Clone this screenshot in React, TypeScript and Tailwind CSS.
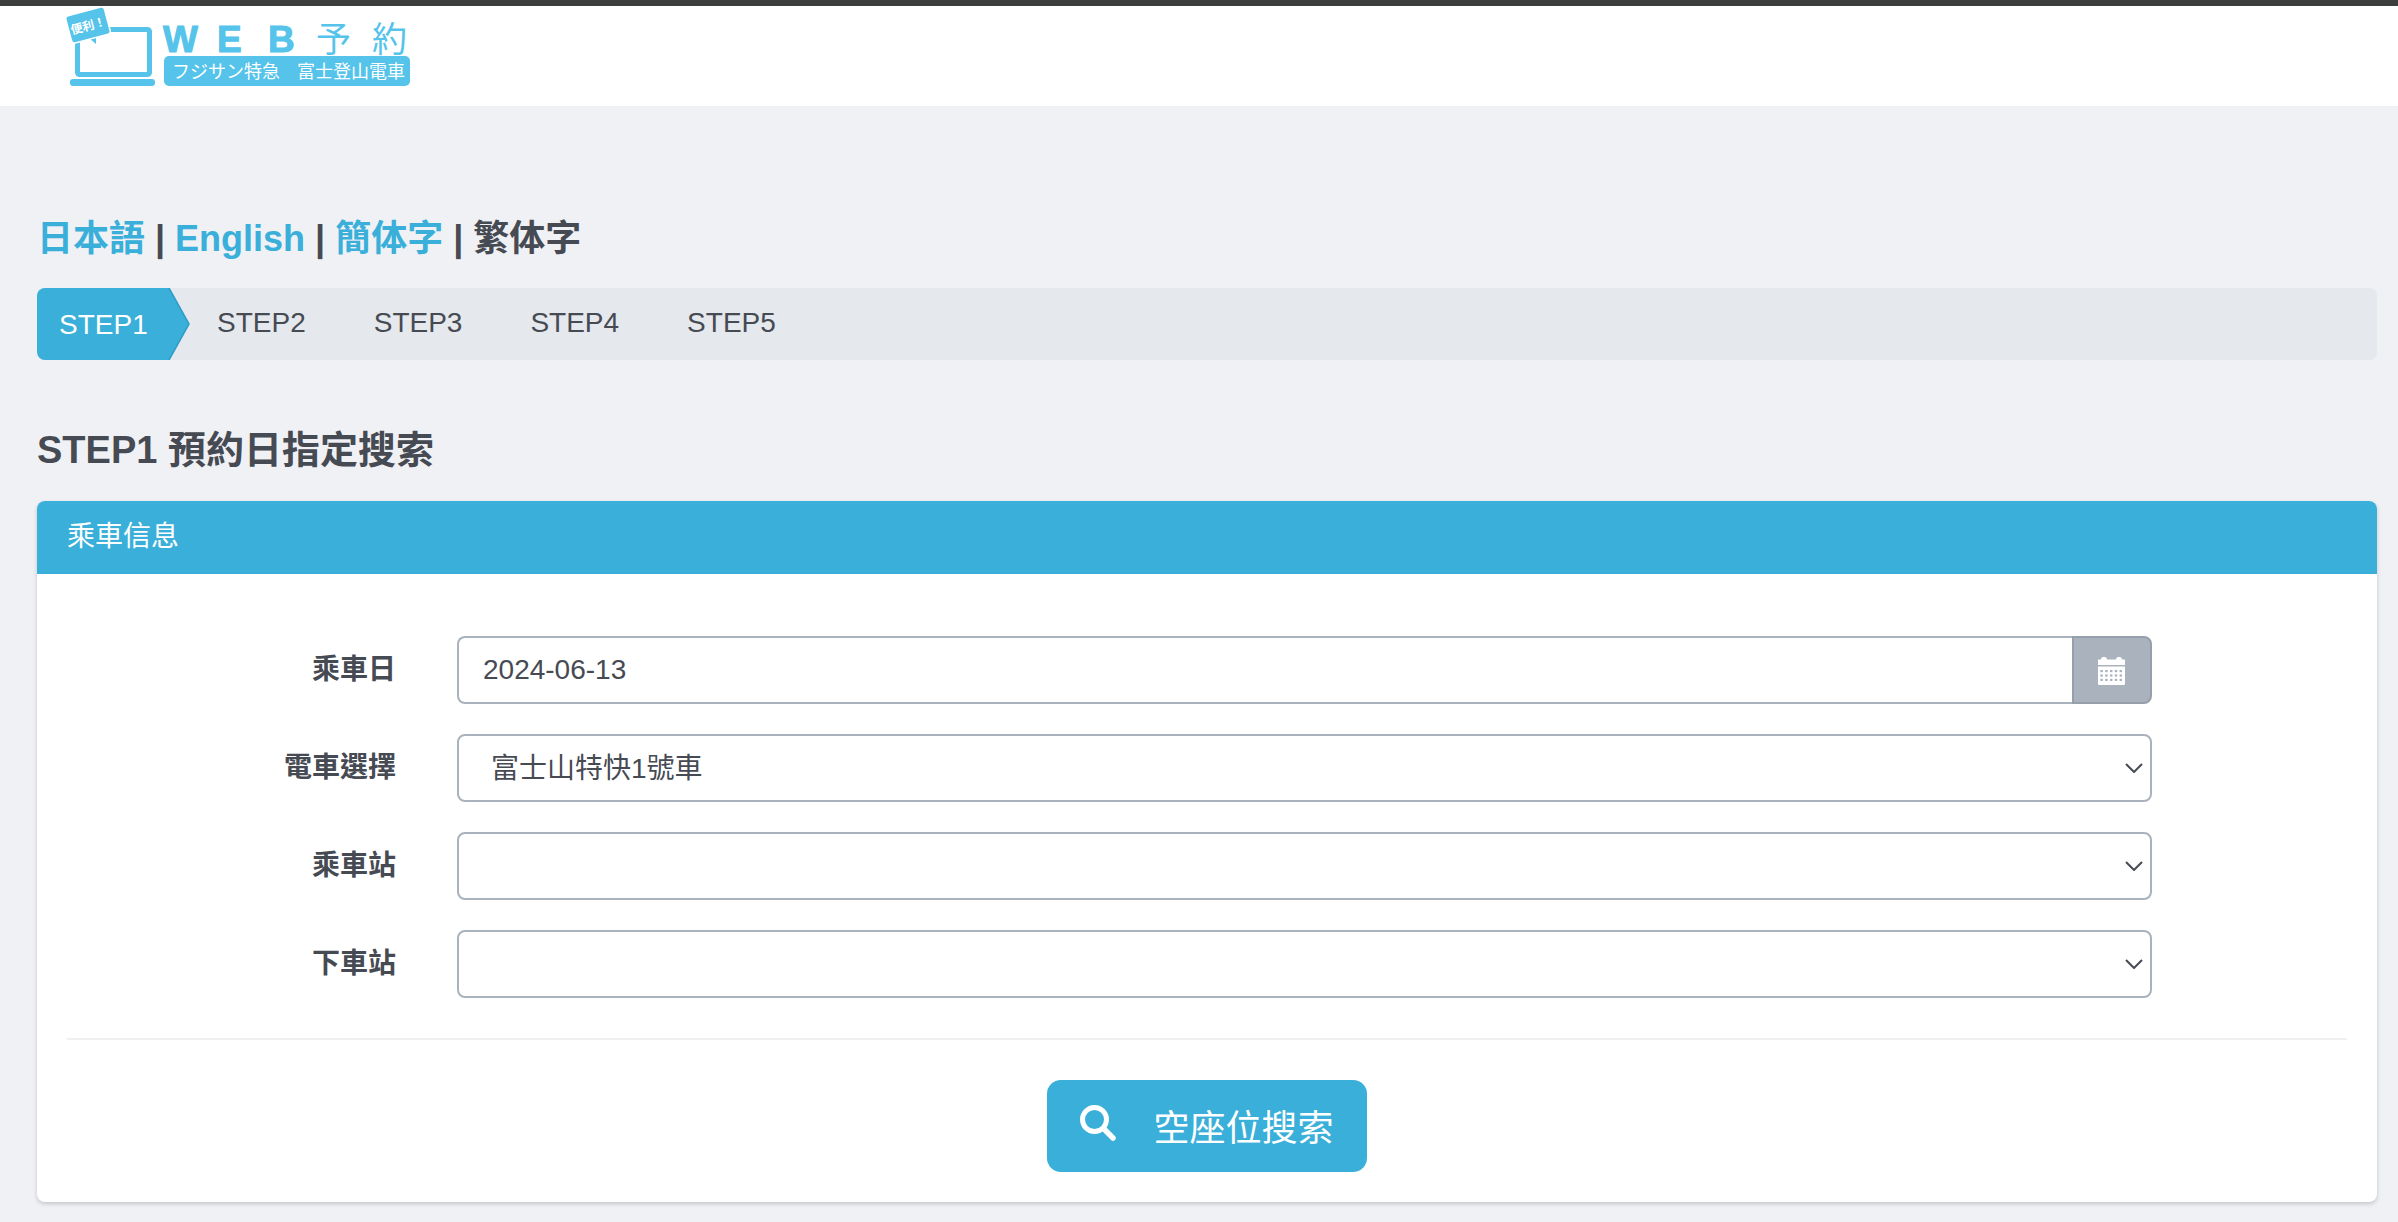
import React from "react";

const FONT = "font-['Liberation_Sans','Noto_Sans_CJK_TC',sans-serif]";

function Logo() {
  const c = "#55c3ea";
  const latin = "'Liberation Sans',sans-serif";
  const jp = "'Noto Sans CJK JP',sans-serif";
  return (
    <svg width="360" height="90" viewBox="0 0 360 90" className="block">
      <rect x="11" y="73" width="85" height="7" rx="3" fill={c} />
      <rect x="18.5" y="23.5" width="72" height="45" rx="2" fill="none" stroke={c} strokeWidth="5" />
      <path d="M30 32 L37 32 L37 38 Z" fill={c} />
      <g transform="rotate(-15 29 19)">
        <rect x="9" y="5" width="40" height="28" rx="3" fill={c} stroke="#fff" strokeWidth="1.5" />
        <text x="29" y="24" textAnchor="middle" fontSize="12" fontWeight="700" fill="#fff" fontFamily={jp}>便利！</text>
      </g>
      <text x="104" y="46" fontSize="37" fontWeight="700" fill={c} stroke={c} strokeWidth="1" fontFamily={latin}>W</text>
      <text x="158" y="46" fontSize="37" fontWeight="700" fill={c} stroke={c} strokeWidth="1" fontFamily={latin}>E</text>
      <text x="209" y="46" fontSize="37" fontWeight="700" fill={c} stroke={c} strokeWidth="1" fontFamily={latin}>B</text>
      <text x="257" y="46" fontSize="35" fill={c} fontFamily={jp}>予</text>
      <text x="313" y="46" fontSize="35" fill={c} fontFamily={jp}>約</text>
      <rect x="105" y="50" width="246" height="30" rx="5" fill={c} />
      <text x="113" y="72" fontSize="18" fill="#fff" fontFamily={jp}>フジサン特急</text>
      <text x="238" y="72" fontSize="18" fill="#fff" fontFamily={jp}>富士登山電車</text>
    </svg>
  );
}

function CalendarIcon() {
  const dots: React.ReactNode[] = [];
  for (let r = 0; r < 3; r++) {
    for (let i = 0; i < 5; i++) {
      dots.push(<rect key={`${r}-${i}`} x={2.4 + i * 4.8} y={14 + r * 4.4} width="2.4" height="2.2" fill="#a9b2bd" />);
    }
  }
  return (
    <svg width="27" height="29" viewBox="0 0 27 29" className="-ml-[2px]">
      <path d="M0 3.5 H3 Q3 1 5 1 H7 Q9 1 9 3.5 H18 Q18 1 20 1 H22 Q24 1 24 3.5 H27 V9 H0 Z M0 10.5 H27 V28 Q27 29 26 29 H1 Q0 29 0 28 Z" fill="#fff" />
      {dots}
    </svg>
  );
}

function Chevron() {
  return (
    <svg width="18" height="10" viewBox="0 0 18 10" fill="none" stroke="#464a53" strokeWidth="2" className="absolute right-[9px] top-[29px] pointer-events-none">
      <path d="M1 1 L9 9 L17 1" />
    </svg>
  );
}

function Row({ label, children }: { label: string; children: React.ReactNode }) {
  return (
    <div className="flex items-center">
      <label className="w-[329px] text-right text-[28px] font-bold leading-none text-[#464a53]">{label}</label>
      <div className="ml-[61px] w-[1695px] relative">{children}</div>
    </div>
  );
}

function Select({ value }: { value?: string }) {
  return (
    <div className="relative">
      <select
        defaultValue={value ?? ""}
        className={`${FONT} block h-[68px] w-full appearance-none rounded-lg border-2 border-[#a9b2bd] bg-white pl-[32px] pt-[2px] text-[28px] text-[#464a53] outline-none`}
      >
        <option value={value ?? ""}>{value ?? ""}</option>
      </select>
      <Chevron />
    </div>
  );
}

export default function App() {
  const steps = ["STEP2", "STEP3", "STEP4", "STEP5"];
  return (
    <div className={`${FONT} h-[1222px] overflow-hidden bg-[#f0f1f5] text-[#464a53]`}>
      <header className="h-[106px] border-t-[6px] border-[#3c3d3d] bg-white pl-[59px]">
        <Logo />
      </header>
      <main className="pl-[37px] pr-[21px]">
        <div className="mt-[108px] h-[50px] text-[36px] font-bold leading-[50px]">
          <span className="text-[#39afd9]">日本語</span>
          <span> | </span>
          <span className="text-[#39afd9]">English</span>
          <span> | </span>
          <span className="text-[#39afd9]">簡体字</span>
          <span> | </span>
          <span>繁体字</span>
        </div>

        <nav className="mt-[24px] flex h-[72px] items-center rounded-lg bg-[#e5e8ec]">
          <div className="relative flex h-full w-[132px] items-center rounded-l-lg bg-[#39afd9] pl-[22px] pt-[2px] text-[28px] text-white">
            STEP1
            <svg width="22" height="72" viewBox="0 0 22 72" className="absolute left-[131px] top-0">
              <path d="M1 0 L21 36 L1 72 Z" fill="#39afd9" />
              <path d="M1 0 L21 36 L1 72" fill="none" stroke="#2a9cc4" strokeWidth="1.5" />
            </svg>
          </div>
          <div className="ml-[48px] flex gap-[68px] pb-[2px] text-[28px] text-[#464a53]">
            {steps.map((s) => (
              <span key={s}>{s}</span>
            ))}
          </div>
        </nav>

        <h1 className="mt-[61px] mb-[22px] h-[58px] text-[38px] font-bold leading-[58px]">STEP1 預約日指定搜索</h1>

        <section className="h-[701px] rounded-lg bg-white shadow-[0_2px_4px_rgba(0,0,0,0.18)]">
          <div className="flex h-[73px] items-center rounded-t-lg bg-[#39afd9] pb-[2px] pl-[30px] text-[28px] leading-none text-white">乘車信息</div>
          <div className="px-[30px] pt-[62px]">
            <div className="flex flex-col gap-[30px]">
              <Row label="乘車日">
                <div className="flex h-[68px]">
                  <input
                    readOnly
                    value="2024-06-13"
                    className={`${FONT} h-full min-w-0 flex-1 rounded-l-lg border-2 border-r-0 border-[#a9b2bd] bg-white pl-[24px] text-[28px] text-[#464a53] outline-none`}
                  />
                  <div className="flex h-full w-[80px] items-center justify-center rounded-r-lg border-2 border-[#96a0ac] bg-[#a9b2bd]">
                    <CalendarIcon />
                  </div>
                </div>
              </Row>
              <Row label="電車選擇">
                <Select value="富士山特快1號車" />
              </Row>
              <Row label="乘車站">
                <Select />
              </Row>
              <Row label="下車站">
                <Select />
              </Row>
            </div>
            <hr className="mt-[40px] border-t-2 border-[#eef0f2]" />
            <div className="mt-[40px] flex justify-center pr-[1px]">
              <button className="flex h-[92px] w-[320px] items-center rounded-[14px] bg-[#39afd9] pl-[33px] text-white">
                <svg width="36" height="36" viewBox="0 0 36 36" fill="none" stroke="#fff" className="-mt-[7px]">
                  <circle cx="14.5" cy="14.5" r="12" strokeWidth="5" />
                  <path d="M24 24 L33 33" strokeWidth="5.5" strokeLinecap="round" />
                </svg>
                <span className="ml-[38px] mt-[5px] text-[36px] font-normal leading-none">空座位搜索</span>
              </button>
            </div>
          </div>
        </section>
      </main>
    </div>
  );
}
